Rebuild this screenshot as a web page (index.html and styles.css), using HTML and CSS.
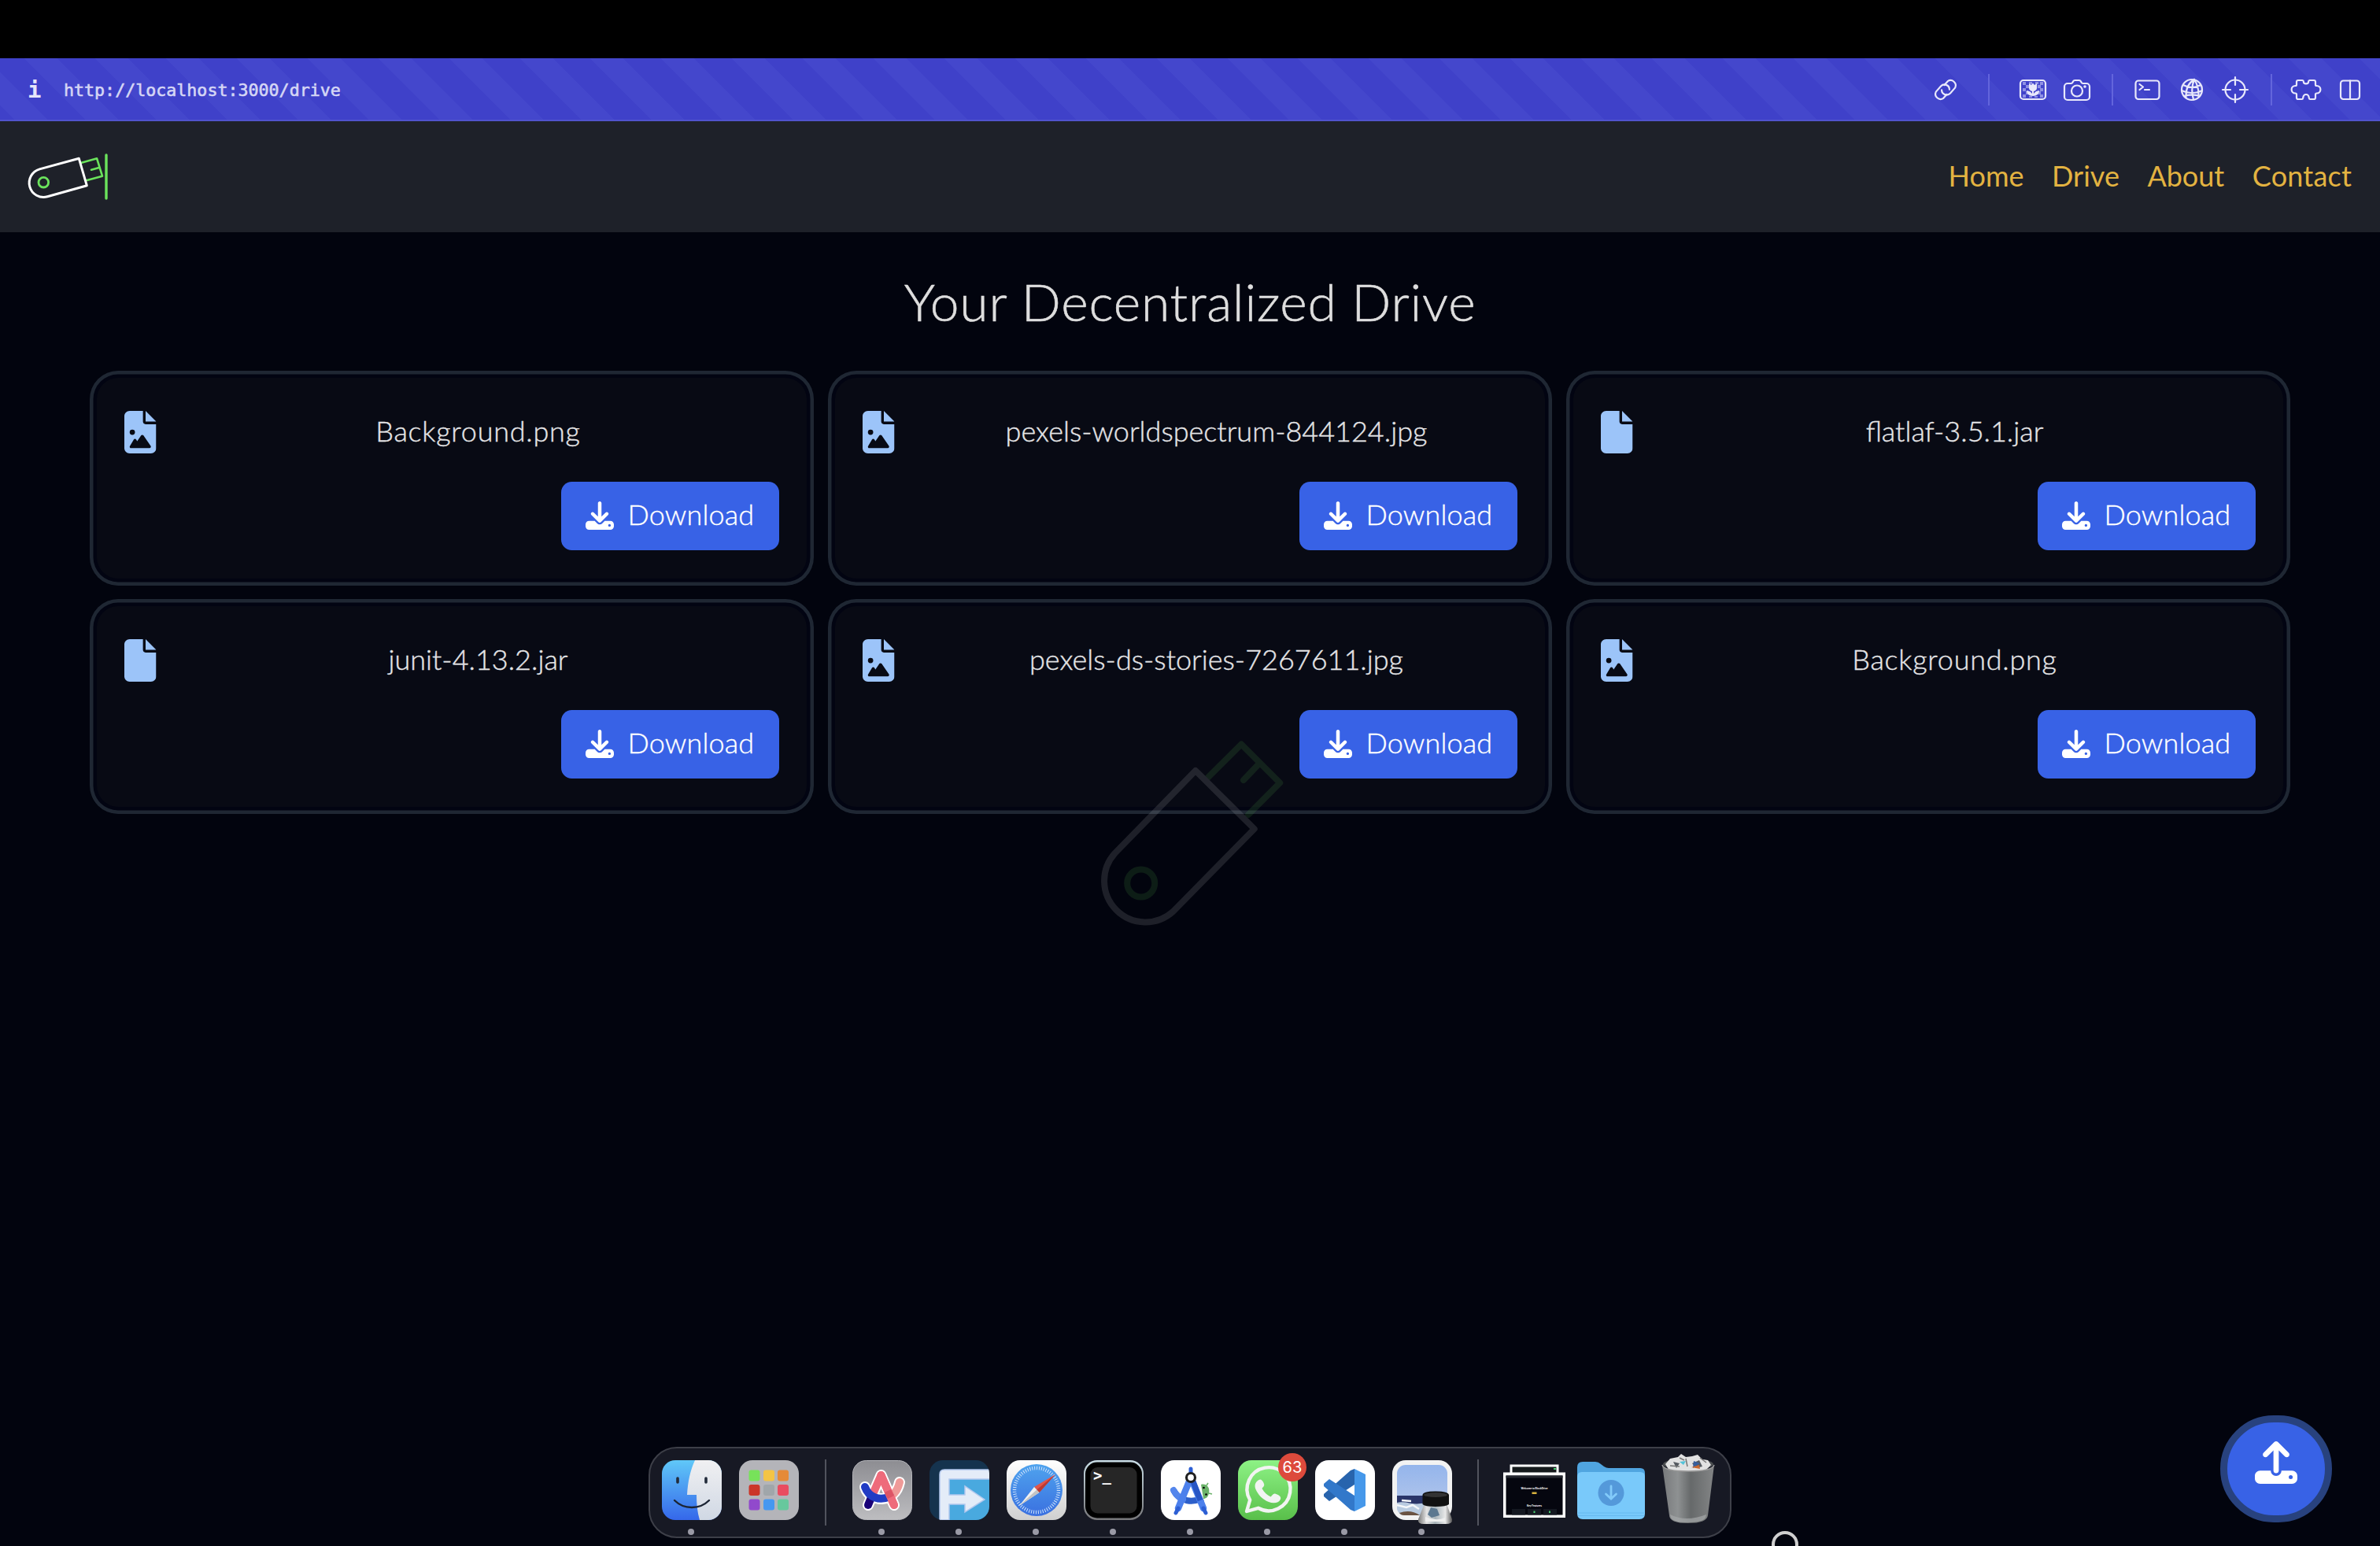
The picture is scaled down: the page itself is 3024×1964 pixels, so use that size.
FILE: index.html
```html
<!DOCTYPE html>
<html lang="en">
<head>
<meta charset="utf-8">
<title>Your Decentralized Drive</title>
<link rel="stylesheet" href="styles.css">
</head>
<body>
<svg width="0" height="0" class="defs" aria-hidden="true">
  <symbol id="file" viewBox="0 0 384 512"><path d="M0 64C0 28.7 28.7 0 64 0H224V128c0 17.700 14.300 32 32 32H384V448c0 35.300-28.700 64-64 64H64c-35.300 0-64-28.700-64-64V64zm384 64H256V0L384 128z"/></symbol>
  <symbol id="file-image" viewBox="0 0 384 512"><path d="M64 0C28.700 0 0 28.700 0 64V448c0 35.300 28.700 64 64 64H320c35.300 0 64-28.700 64-64V160H256c-17.700 0-32-14.300-32-32V0H64zM256 0V128H384L256 0zM64 256a32 32 0 1 1 64 0 32 32 0 1 1 -64 0zm152 32c5.300 0 10.200 2.600 13.200 6.900l88 128c3.400 4.900 3.700 11.300 1 16.500s-8.200 8.600-14.200 8.600H80c-5.800 0-11.100-3.100-13.900-8.100s-2.800-11.200 .2-16.100l48-80c2.900-4.800 8.100-7.800 13.700-7.800s10.800 2.900 13.700 7.800l12.800 21.400 48.300-70.200c3-4.300 7.900-6.900 13.200-6.900z"/></symbol>
  <symbol id="download" viewBox="0 0 512 512"><path d="M288 32c0-17.700-14.300-32-32-32s-32 14.300-32 32V274.700l-73.400-73.400c-12.500-12.500-32.800-12.500-45.300 0s-12.500 32.800 0 45.300l128 128c12.500 12.500 32.800 12.500 45.300 0l128-128c12.500-12.500 12.500-32.800 0-45.300s-32.800-12.500-45.300 0L288 274.700V32zM64 352c-35.300 0-64 28.700-64 64v32c0 35.300 28.700 64 64 64H448c35.300 0 64-28.700 64-64V416c0-35.300-28.700-64-64-64H346.500l-45.300 45.300c-25 25-65.500 25-90.500 0L165.500 352H64zm368 56a24 24 0 1 1 0 48 24 24 0 1 1 0-48z"/></symbol>
  <symbol id="upload" viewBox="0 0 512 512"><path d="M288 109.300V352c0 17.700-14.300 32-32 32s-32-14.300-32-32V109.300l-73.400 73.400c-12.500 12.500-32.800 12.500-45.300 0s-12.500-32.800 0-45.300l128-128c12.500-12.500 32.800-12.500 45.300 0l128 128c12.500 12.500 12.500 32.800 0 45.300s-32.800 12.500-45.300 0L288 109.300zM64 352H192c0 35.300 28.700 64 64 64s64-28.700 64-64H448c35.300 0 64 28.700 64 64v32c0 35.300-28.700 64-64 64H64c-35.300 0-64-28.700-64-64V416c0-35.300 28.700-64 64-64zM432 456a24 24 0 1 0 0-48 24 24 0 1 0 0 48z"/></symbol>
</svg>

<div class="notch-strip"></div>

<div class="browser-bar">
  <span class="info">i</span>
  <span class="url">http://localhost:3000/drive</span>
  <div class="tools">
    <svg class="tool link" width="34" height="34" viewBox="0 0 34 34"><g transform="rotate(-49 17 17)"><path d="M13.500 22H7a6.500 6.500 0 0 1 0-12.500h9.500a6.300 6.300 0 0 1 4 11"/><path d="M20.500 12H27a6.500 6.500 0 0 1 0 12.500h-9.500a6.300 6.300 0 0 1-4-11"/></g></svg>
    <i class="divider d1"></i>
    <svg class="tool image" width="36" height="34" viewBox="0 0 36 34"><g fill="#8f91e4" stroke="none"><path d="M5 7h4v4H5zM9 11h4v4H9zM5 15h4v4H5zM9 19h4v4H9zM5 23h4v4H5zM13 7h4v3h-4zM21 7h4v3h-4zM27 7h4v4h-4zM24 11h4v4h-4zM27 15h4v4h-4zM24 19h4v4h-4zM27 23h4v4h-4zM13 25h4v2h-4zM20 25h4v2h-4z"/></g><rect x="2" y="5" width="32" height="24" rx="4"/><path class="solid" d="M13 9l3 2 2-2.500 2 2.500 3-2v6c0 2-2 3.500-4 4v3c2-3 4-3.500 7-4 0 4-3 7-8 7s-8-3-8-7c3 .5 5 1 7 4v-3c-2-.5-4-2-4-4z"/></svg>
    <svg class="tool camera" width="36" height="34" viewBox="0 0 36 34"><path d="M6 9h4.500c1 0 1.500-.5 2-1.500l.8-1.500c.4-.8 1-1 2-1h5.400c1 0 1.600.2 2 1l.8 1.500c.5 1 1 1.500 2 1.500H30a4 4 0 0 1 4 4v13a4 4 0 0 1-4 4H6a4 4 0 0 1-4-4V13a4 4 0 0 1 4-4z"/><circle cx="18" cy="18.500" r="7"/><circle class="solid" cx="28" cy="13" r="1.800"/></svg>
    <i class="divider d2"></i>
    <svg class="tool term" width="36" height="34" viewBox="0 0 36 34"><rect x="2.500" y="5.500" width="30" height="23.500" rx="3.500"/><path d="M7.500 10l4.500 3.500-4.500 3.500M14 17h6"/></svg>
    <svg class="tool globe" width="34" height="34" viewBox="0 0 34 34"><circle cx="17" cy="17" r="13"/><path d="M20 4C13 8 9 15 9.500 27M20 4c-3 7-4 15-1 25.500M20 4c4 6 6 13 5.500 22M6 11c7 4 16 4 22 0M4 18c8 4 18 4 26 0M7 25c6-2 14-2 20 0"/></svg>
    <svg class="tool target" width="36" height="36" viewBox="0 0 36 36"><circle cx="18" cy="18" r="12.500"/><path d="M18 2v10M18 24v10M2 18h10M24 18h10"/></svg>
    <i class="divider d3"></i>
    <svg class="tool puzzle" width="40" height="34" viewBox="0 0 40 34"><path d="M10 5h5.500c.8 0 1.300.6 1.300 1.400 0 4 6.400 4 6.400 0 0-.8.500-1.400 1.300-1.400H30c1 0 2 1 2 2v3.500c0 1 .6 1.500 1.500 1.500 6.500 0 6.500 9.500 0 9.500-.9 0-1.500.5-1.500 1.500V27c0 1-1 2-2 2h-5c-.8 0-1-.6-1.200-1.500-.5-6-7.100-6-7.600 0-.2.900-.4 1.500-1.200 1.500h-5c-1 0-2-1-2-2v-4c0-1-.6-1.500-1.500-1.500-6.500 0-6.500-9.500 0-9.500.9 0 1.500-.5 1.500-1.500V7c0-1 1-2 2-2z"/></svg>
    <svg class="tool split" width="30" height="34" viewBox="0 0 30 34"><rect x="3" y="5.500" width="24" height="23.500" rx="3.500"/><path d="M15 5.500V29"/></svg>
  </div>
</div>

<header class="nav">
  <svg class="logo" width="110" height="70" viewBox="33 190 110 70" fill="none" stroke-linejoin="round" stroke-linecap="round">
    <path d="M102.500 206.700l19.600-5.400 6.900 22.400-20.400 5.600M125.700 212.700l-10.700 3" stroke="#6be35c" stroke-width="2.600"/>
    <circle cx="54.300" cy="231.700" r="6.300" stroke="#6be35c" stroke-width="2.800"/>
    <path d="M99.300 201.300l10 34.400-50 14.100A17.900 17.900 0 0 1 49.300 214.900z" stroke="#fff" stroke-width="3"/>
    <path d="M134 197v55" stroke="#6be35c" stroke-width="3.400"/>
  </svg>
  <nav class="menu"><a class="m1">Home</a><a class="m2">Drive</a><a class="m3">About</a><a class="m4">Contact</a></nav>
</header>

<main class="page">
  <h1 class="title"><span>Your Decentralized Drive</span></h1>
  <section class="grid">
    <article class="card"><div class="row"><svg class="ficon"><use href="#file-image"/></svg><p class="name"><span class="n1">Background.png</span></p></div><button class="btn"><svg class="dl"><use href="#download"/></svg><span>Download</span></button></article>
    <article class="card"><div class="row"><svg class="ficon"><use href="#file-image"/></svg><p class="name"><span class="n2">pexels-worldspectrum-844124.jpg</span></p></div><button class="btn"><svg class="dl"><use href="#download"/></svg><span>Download</span></button></article>
    <article class="card"><div class="row"><svg class="ficon"><use href="#file"/></svg><p class="name"><span class="n3">flatlaf-3.5.1.jar</span></p></div><button class="btn"><svg class="dl"><use href="#download"/></svg><span>Download</span></button></article>
    <article class="card"><div class="row"><svg class="ficon"><use href="#file"/></svg><p class="name"><span class="n4">junit-4.13.2.jar</span></p></div><button class="btn"><svg class="dl"><use href="#download"/></svg><span>Download</span></button></article>
    <article class="card"><div class="row"><svg class="ficon"><use href="#file-image"/></svg><p class="name"><span class="n5">pexels-ds-stories-7267611.jpg</span></p></div><button class="btn"><svg class="dl"><use href="#download"/></svg><span>Download</span></button></article>
    <article class="card"><div class="row"><svg class="ficon"><use href="#file-image"/></svg><p class="name"><span class="n1">Background.png</span></p></div><button class="btn"><svg class="dl"><use href="#download"/></svg><span>Download</span></button></article>
  </section>
</main>

<svg class="watermark" width="260" height="260" viewBox="1382 930 260 260" fill="none" stroke-width="8" stroke-linejoin="round" stroke-linecap="round">
  <path d="M1535.500 987l42.700-42.500 49 49L1587 1034M1600 970l-19 20" stroke="#6be35c"/>
  <circle cx="1450.700" cy="1121" r="17.500" stroke="#6be35c"/>
  <path d="M1520 978l74.700 74L1491.500 1157A52.400 52.400 0 0 1 1417.500 1083z" stroke="#fff"/>
</svg>

<button class="upload" aria-label="Upload"><svg width="54" height="54"><use href="#upload"/></svg></button>

<div class="dock">
  <div class="app"><svg width="98" height="112" viewBox="0 0 98 112">
    <defs><linearGradient id="fb" x2="0" y2="1"><stop stop-color="#60c8f8"/><stop offset="1" stop-color="#3567ea"/></linearGradient><linearGradient id="fw" x2="0" y2="1"><stop stop-color="#f0f0f2"/><stop offset="1" stop-color="#d0d8e4"/></linearGradient><clipPath id="sq"><rect x="11" y="15" width="76" height="76" rx="17"/></clipPath></defs>
    <g clip-path="url(#sq)"><rect x="11" y="15" width="76" height="76" fill="url(#fb)"/><path d="M53 15C47 28 44 42 43 59h12c0 12 1 22 4 32h30V15z" fill="url(#fw)"/></g>
    <path d="M31 38v5M67 38v5" stroke="#222b3a" stroke-width="3.600" stroke-linecap="round"/><path d="M27 66c12 12 32 12 44 0" fill="none" stroke="#1b2433" stroke-width="2.400" stroke-linecap="round"/></svg><b class="dot"></b></div>
  <div class="app"><svg width="98" height="112" viewBox="0 0 98 112"><rect x="11" y="15" width="76" height="76" rx="17" fill="#b4b4b9"/>
    <rect x="23.500" y="27.500" width="14" height="14" rx="3" fill="#77e25a"/><rect x="42" y="27.500" width="14" height="14" rx="3" fill="#f4c445"/><rect x="60" y="27.500" width="14" height="14" rx="3" fill="#e58a38"/>
    <rect x="23.500" y="46" width="14" height="14" rx="3" fill="#cb3529"/><rect x="42" y="46" width="14" height="14" rx="3" fill="#a0a6aa"/><rect x="60" y="46" width="14" height="14" rx="3" fill="#e94c60"/>
    <rect x="23.500" y="64.500" width="14" height="14" rx="3" fill="#9149cc"/><rect x="42" y="64.500" width="14" height="14" rx="3" fill="#4598f0"/><rect x="60" y="64.500" width="14" height="14" rx="3" fill="#67c89d"/></svg></div>
  <i class="sep"></i>
  <div class="app"><svg width="98" height="112" viewBox="0 0 98 112">
    <defs><linearGradient id="ag" x2="0" y2="1"><stop stop-color="#8d8d92"/><stop offset="1" stop-color="#bdbdc0"/></linearGradient></defs>
    <rect x="11.500" y="15.500" width="75" height="75" rx="17" fill="url(#ag)" stroke="#b5b5ba"/>
    <g fill="none" stroke-linecap="round" stroke-linejoin="round"><g stroke="#fff" stroke-width="14"><path d="M31 72L47.500 34 64 72M27 49c6 20 38 22 44-6"/></g>
    <path d="M31 72l5-12" stroke="#190078" stroke-width="10"/><path d="M71 43c-2 9-6 14-10 17" stroke="#ef9a98" stroke-width="10"/><path d="M37 58L47.500 34 64 72" stroke="#ee6b7b" stroke-width="10"/><path d="M27 49c5 14 19 18 32 12" stroke="#213cc4" stroke-width="10"/><path d="M47.500 34L64 72" stroke="#ee6b7b" stroke-width="10"/><path d="M56 54l4 8" stroke="#dd5465" stroke-width="9" stroke-linecap="butt"/></g></svg><b class="dot"></b></div>
  <div class="app"><svg width="98" height="112" viewBox="0 0 98 112">
    <g clip-path="url(#sq)"><rect x="11" y="15" width="76" height="76" fill="#15334e"/><path d="M27 31h60v60H27z" fill="#49a9df"/><path d="M24 91V33q0-6 6-6h58v12H36v20h20V48l25 17-25 16V71H36v20z" fill="#e4ecf8" stroke="#b3c8ee" stroke-width="1.500"/></g></svg><b class="dot"></b></div>
  <div class="app"><svg width="98" height="112" viewBox="0 0 98 112">
    <defs><linearGradient id="sw" x2="0" y2="1"><stop stop-color="#fff"/><stop offset="1" stop-color="#cfcfcf"/></linearGradient><linearGradient id="sb" x2="0" y2="1"><stop stop-color="#4fa3ee"/><stop offset="1" stop-color="#3a70e0"/></linearGradient></defs>
    <rect x="11" y="15" width="76" height="76" rx="17" fill="url(#sw)"/><circle cx="49" cy="53" r="33" fill="url(#sb)"/><circle cx="49" cy="53" r="28" fill="none" stroke="#cfe3fb" stroke-width="4.500" stroke-dasharray="1 1.930"/>
    <path d="M73 33L46 49l6.500 7z" fill="#e2564a"/><path d="M46 49L27 73l25.500-17z" fill="#f1f1f1"/><path d="M73 33L49.300 52.500l3.200 3.500z" fill="#bb3b33"/><path d="M49.300 52.500L27 73l25.500-17z" fill="#c4c4c4"/></svg><b class="dot"></b></div>
  <div class="app"><svg width="98" height="112" viewBox="0 0 98 112">
    <defs><linearGradient id="tg" x2="0" y2="1"><stop stop-color="#c9dde6"/><stop offset="1" stop-color="#77777a"/></linearGradient></defs>
    <rect x="11" y="15" width="76" height="76" rx="17" fill="url(#tg)"/><rect x="13" y="17.500" width="72" height="71" rx="15" fill="#000"/><rect x="19.500" y="24" width="59" height="58.500" rx="9" fill="#262626"/><text x="23" y="41" class="prompt">&gt;_</text></svg><b class="dot"></b></div>
  <div class="app"><svg width="98" height="112" viewBox="0 0 98 112">
    <rect x="11" y="15" width="76" height="76" rx="17" fill="#fff"/><path d="M62 46c6-2 12 3 10 11-1 5-4 7-7 7z" fill="#6bb26a"/><path d="M69 47l2-3M72 57l4 1" stroke="#6bb26a" stroke-width="1.600"/><circle cx="65.500" cy="50" r="1.300"/><circle cx="68.500" cy="58.500" r="1.300"/>
    <path d="M27 53c8 16 26 16 37 10" fill="none" stroke="#2d5fca" stroke-width="8"/><path d="M27 53c3 6 6 9 12 12" fill="none" stroke="#5486ec" stroke-width="8" stroke-linecap="round"/>
    <path d="M49 37L33 76M49 37l16 39" stroke="#4c80ec" stroke-width="8.500" stroke-linecap="round"/><path d="M52 42l9 24" stroke="#2856c4" stroke-width="7"/><path d="M33 76l-3 6M65 76l3 6M49 26v6" stroke="#2d5fd4" stroke-width="5" stroke-linecap="round"/><circle cx="49" cy="37" r="5.500" fill="#fff" stroke="#212121" stroke-width="3.200"/></svg><b class="dot"></b></div>
  <div class="app"><svg width="98" height="112" viewBox="0 0 98 112">
    <defs><linearGradient id="wg" x2="0" y2="1"><stop stop-color="#8df285"/><stop offset="1" stop-color="#59bf4a"/></linearGradient></defs>
    <rect x="11" y="15" width="76" height="76" rx="17" fill="url(#wg)"/><path d="M22 80l4.200-14.500a27.500 27.500 0 1 1 10.500 10.300z" fill="none" stroke="#f2f4f2" stroke-width="4.400" stroke-linejoin="round"/>
    <path d="M36 41c3-3 6-1.500 8 4 1 3-1.500 4-2.500 6 3 5 6 8 11 10.500 2-1.500 3-4.500 5.500-4 6 2 8 4 7 7-2 5-9 6-15 3.500-8-3-14-10-16.500-16-2-5-.5-8.500 2.500-11z" fill="#f2f4f2"/></svg><span class="badge">63</span><b class="dot"></b></div>
  <div class="app"><svg width="98" height="112" viewBox="0 0 98 112">
    <rect x="11" y="15" width="76" height="76" rx="17" fill="#fff"/><path d="M61 26v20L29 67l-7-6v-3l34-30z" fill="#2864ad"/><path d="M61 80V60L29 39l-7 6v3l34 30z" fill="#3278ca"/><path d="M61 26l14 7v40l-14 7z" fill="#4698ea"/></svg><b class="dot"></b></div>
  <div class="app"><svg width="98" height="112" viewBox="0 0 98 112">
    <defs><linearGradient id="ps" x2="0" y2="1"><stop stop-color="#94b5ec"/><stop offset="1" stop-color="#b9c9ea"/></linearGradient><linearGradient id="jar"><stop stop-color="#777"/><stop offset=".25" stop-color="#e4e4e4"/><stop offset=".5" stop-color="#a9b4ba"/><stop offset=".8" stop-color="#e8e8e8"/><stop offset="1" stop-color="#555"/></linearGradient></defs>
    <rect x="11" y="15" width="76" height="76" rx="17" fill="#f2f2f2"/><rect x="17" y="21" width="64" height="64" rx="11" fill="url(#ps)"/><path d="M17 60h64v12H17z" fill="#2a3569"/><path d="M17 69c12-3 18 3 30 1s20 2 34-2v8a9 9 0 0 1-9 9H26a9 9 0 0 1-9-9z" fill="#b9cbe0"/><path d="M17 72l12 3 8-3 8 5M23 66l12 1" stroke="#f4f7fa" stroke-width="2.500" fill="none"/><path d="M20 82q14-5 26 3H26q-4 0-6-3z" fill="#6b5342"/>
    <path d="M52 70h28l7 20q1 6-8 6H51q-8 0-7-6z" fill="url(#jar)"/><path d="M60 75l8 2 3 8-10 3-5-4z" fill="#5c7890"/><path d="M53 87q14 6 25 1v5H53z" fill="#eee"/><path d="M49.500 59.500q0-5 16.500-5t17 5V71q-3 3-17 3t-16.500-3z" fill="#111"/><ellipse cx="66" cy="59" rx="15" ry="3" fill="#333"/></svg><b class="dot"></b></div>
  <i class="sep narrow"></i>
  <div class="app"><svg width="98" height="112" viewBox="0 0 98 112">
    <path d="M18.500 20.500h62V40h-62z" fill="#fff"/><path d="M21.500 23.500h56v8h-56z" fill="#151a1c"/><path d="M74 25h3v2h-3z" fill="#45c86e"/><path d="M10 30.500h79V88H10z" fill="#fff"/><path d="M13.500 34.500h72V84.500h-72z" fill="#05060f"/><path d="M13.500 34.500h72v3h-72z" fill="#252831"/>
    <text x="49.500" y="52" class="mini">Welcome to BlockDrive</text><path d="M46.500 55.500h6v2.500h-6z" fill="#d9b23e"/><text x="49.500" y="74" class="mini">Key Features</text><path d="M21 77h17V84.500H21zM41 77h17V84.500H41zM61 77h17V84.500H61z" fill="#141821"/><path d="M48.500 79.500h2v2.500h-2zM68 79.500h2v2.500h-2z" fill="#45c86e"/></svg></div>
  <div class="app"><svg width="98" height="112" viewBox="0 0 98 112">
    <path d="M6 24q0-7 7-7h16q4 0 7 3l4 3q3 2 6 2h40q6 0 6 6v20H6z" fill="#50a5e0"/><path d="M6 36q0-6 6-6h74q6 0 6 6v47q0 7-7 7H13q-7 0-7-7z" fill="#79c9fa"/><path d="M7 82h84M7 85.500h84" stroke="#66b9ef"/><circle cx="49" cy="56.500" r="16.500" fill="#5499da"/><path d="M49 48v15M42.500 58l6.500 6 6.500-6" fill="none" stroke="#83cbfa" stroke-width="2.800" stroke-linecap="round"/></svg></div>
  <div class="app"><svg width="98" height="112" viewBox="0 0 98 112">
    <defs><linearGradient id="tr"><stop stop-color="#77797b"/><stop offset=".3" stop-color="#8e9192"/><stop offset=".55" stop-color="#66696a"/><stop offset="1" stop-color="#838586"/></linearGradient></defs>
    <ellipse cx="49" cy="20" rx="32" ry="7.500" fill="#4d5052"/><path d="M20 20l6-7 10-2 4-4 6 4 8-1 7-2 6 6 7 1 4 6-9 9H26z" fill="#e2e2e2"/><path d="M30 17l8 2-4 6zM54 19l9-4 4 8-8 2z" fill="#555a60"/><path d="M38 17l8-1-3 5z" fill="#53c3d9"/><path d="M56 16l8 3-9 6z" fill="#375f9c"/><path d="M53 24l10-3 1 5z" fill="#c8682f"/><path d="M38 12l6 3M64 12l8 6M26 22l12 1M46 13l2 10" stroke="#777" stroke-width="1.500"/>
    <path d="M16 21q2 8 33 8t33-8l-8 64q-1 10-25 10T25 85z" fill="url(#tr)"/><path d="M16 21q2 8 33 8t33-8" fill="none" stroke="#999" stroke-width="1.500"/><path d="M26 84q20 10 46 0l-1 4q-4 6-22 6t-22-6z" fill="#a5a8a9" opacity=".7"/></svg></div>
</div>

<div class="cursor"></div>
</body>
</html>
```
FILE: styles.css
```css
* { box-sizing: border-box; }
html, body { margin: 0; }
body {
  position: relative;
  width: 3024px;
  height: 1964px;
  overflow: hidden;
  background: #02040e;
  font-family: Lato, "Open Sans", sans-serif;
  font-size: 36px;
}
.defs { position: absolute; }
.notch-strip { height: 74px; background: #000; }

/* Browser toolbar */
.browser-bar {
  display: flex;
  align-items: center;
  height: 80px;
  padding: 2px 23px 0 35px;
  border-bottom: 2px solid #5053cd;
  background: repeating-linear-gradient(45deg, #3f41c9 0 13.300px, #4447cc 13.300px 43px, #3f41c9 43px 63.570px);
  color: #e6e6fa;
}
.info { width: 46px; font: bold 29px "DejaVu Sans Mono", monospace; }
.url { font: 21.650px "DejaVu Sans Mono", monospace; color: #d5d6f5; -webkit-text-stroke: .6px #d5d6f5; }
.tools { display: flex; align-items: center; margin-left: auto; }
.tool { fill: none; stroke: #e8e8fb; stroke-width: 2.200; stroke-linecap: round; stroke-linejoin: round; }
.tool .solid { fill: #e8e8fb; stroke: none; }
.divider { width: 2px; height: 40px; background: #6365dc; }
.d1 { margin: 0 37px 0 37px; }
.image { margin-right: 20px; }
.d2 { margin: 0 26px; }
.term { margin-right: 21px; }
.globe { margin-right: 20px; }
.d3 { margin: 0 23px 0 27px; }
.puzzle { margin-right: 21px; }

/* Site header */
.nav {
  display: flex;
  align-items: center;
  justify-content: space-between;
  height: 141px;
  padding: 0 36px 0 34px;
  background: #1e2129;
}
.menu { display: flex; gap: 35.500px; padding-bottom: 4px; color: #e3b341; }
.m4 { letter-spacing: .2px; }

.page { padding: 0 114px; }
.title {
  height: 176px;
  margin: 0;
  padding-top: 48px;
  font-size: 66px;
  font-weight: 300;
  line-height: 80px;
  letter-spacing: .78px;
  text-align: center;
  color: #dedede;
  -webkit-text-stroke: .6px #dedede;
}

/* File cards */
.grid { display: grid; grid-template-columns: repeat(3, 920px); gap: 17.500px 18px; }
.card {
  display: flex;
  flex-direction: column;
  height: 272.500px;
  padding: 44.500px 44.500px 44.500px 44px;
  border-radius: 36px;
  box-shadow: inset 0 0 0 4.500px #1f2733, inset 0 0 0 9px #020412;
  background: #080a14;
}
.row { display: flex; align-items: center; gap: 27px; height: 67px; }
.ficon { width: 40.500px; height: 54px; fill: #9cc4f9; }
.name {
  flex: 1;
  margin: 0;
  padding-bottom: 3px;
  text-align: center;
  font-weight: 300;
  color: #e4e4e6;
  line-height: 54px;
  -webkit-text-stroke: .4px #e4e4e6;
}
.n1 { letter-spacing: .75px; }
.btn {
  display: flex;
  align-items: center;
  align-self: flex-end;
  gap: 18px;
  width: 277px;
  height: 88px;
  margin-top: 29.500px;
  padding: 0 0 0 31px;
  border: 0;
  border-radius: 13.500px;
  background: #3862e6;
  color: #fff;
  font: 300 36px Lato, sans-serif;
  white-space: nowrap;
  -webkit-text-stroke: .4px #fff;
}
.btn span { padding-bottom: 4px; letter-spacing: .15px; }
.dl { width: 36px; height: 36px; fill: #fff; -webkit-text-stroke: 0; }

.watermark { position: absolute; left: 1381px; top: 931px; opacity: .11; }

.upload {
  position: absolute;
  left: 2821px;
  top: 1798px;
  display: flex;
  justify-content: center;
  width: 142px;
  height: 136px;
  padding: 24px 0 0;
  border: 9px solid #28427e;
  border-radius: 71px;
  background: #3862e6;
  fill: #fff;
}

/* Dock */
.dock {
  position: absolute;
  left: 824px;
  top: 1838px;
  display: flex;
  width: 1376px;
  height: 116px;
  padding: 0 4px;
  border: 2px solid #3d3f48;
  border-radius: 36px;
  background: #171924;
}
.app { position: relative; width: 98px; height: 112px; }
.app svg { display: block; }
.dot { position: absolute; left: 44px; bottom: 2px; width: 8px; height: 8px; border-radius: 50%; background: #9a9aa6; }
.sep { width: 2px; height: 84px; margin: 14px 22px; background: #51535d; }
.narrow { margin: 14px 21px; }
.badge {
  position: absolute;
  left: 62px;
  top: 6px;
  width: 36px;
  height: 36px;
  border-radius: 50%;
  background: #dd4a3c;
  color: #fff;
  font: 20px/36px Inter, sans-serif;
  text-align: center;
}
.prompt { font: bold 19px "DejaVu Sans Mono", monospace; fill: #fff; }
.mini { font: bold 3px Inter, sans-serif; fill: #fff; text-anchor: middle; }

.cursor {
  position: absolute;
  left: 2251px;
  top: 1945px;
  width: 34px;
  height: 34px;
  border: 4px solid #cfcfcf;
  border-radius: 50%;
}
```
